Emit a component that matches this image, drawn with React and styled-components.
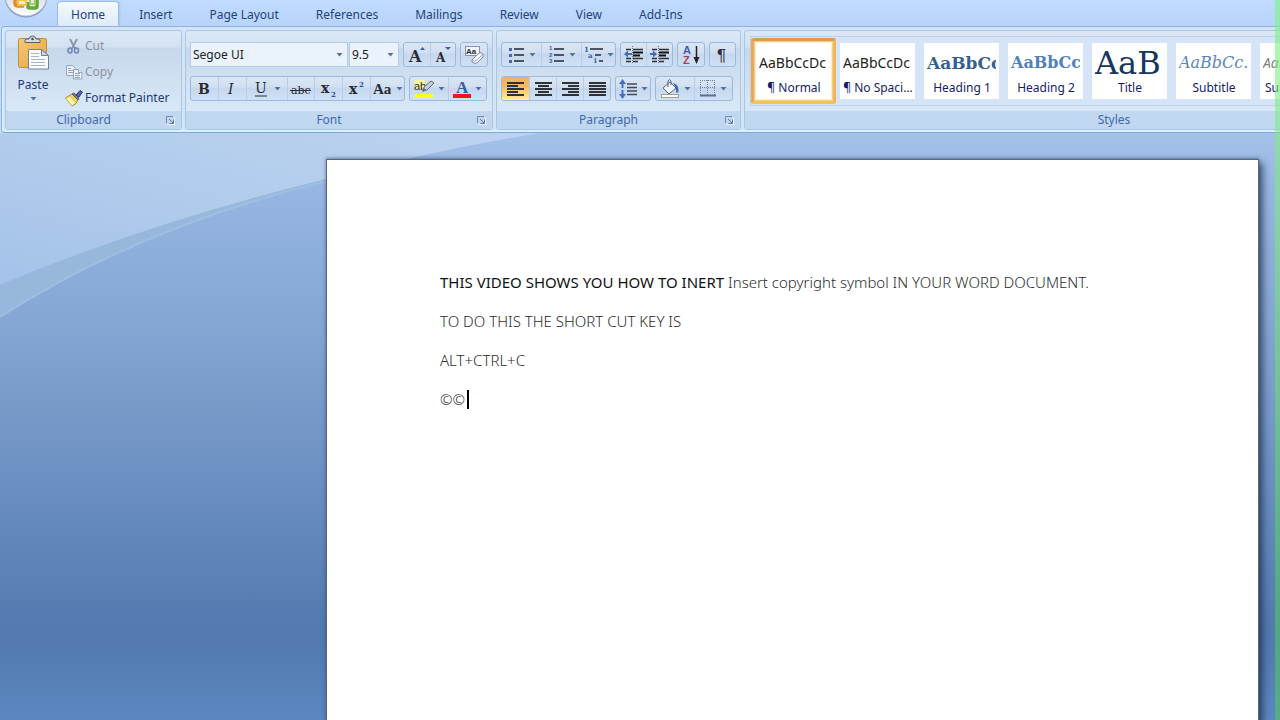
import React, { useState } from 'react'
import styled, { createGlobalStyle, css } from 'styled-components'

const GlobalStyle = createGlobalStyle`
  * {
    box-sizing: border-box;
  }

  body {
    margin: 0;
    font-family: 'Noto Sans', 'Open Sans', sans-serif;
    font-size: 12px;
    line-height: 16px;
    color: #1e3a78;
    background-color: #bfdbff;
  }

  button, input {
    font: inherit;
    color: inherit;
  }

  svg {
    display: block;
    flex: none;
  }
`

const Window = styled.div`
  min-height: 100vh;
  display: flex;
  flex-direction: column;
  overflow: hidden;
`

const EdgeStrip = styled.div`
  position: fixed;
  top: 0;
  right: 0;
  bottom: 0;
  width: 5px;
  pointer-events: none;
  background: linear-gradient(rgba(120, 245, 130, 0.6), rgba(130, 230, 130, 0.6) 30%, rgba(80, 205, 90, 0.55) 85%);
`

const TabBar = styled.nav`
  display: flex;
  align-items: flex-start;
  gap: 1px;
  height: 26px;
  padding-left: 4px;
  background: linear-gradient(#c0dbff, #b9d4fa);
`

const OfficeButton = styled.button`
  width: 52px;
  height: 20px;
  padding: 0;
  border: none;
  background: none;
`

const Tab = styled.button`
  height: 26px;
  padding: 3px 17px 0;
  border: 1px solid transparent;
  border-bottom: none;
  background: none;
  color: #24427c;
  white-space: nowrap;

  ${({ $active }) => $active && css`
    padding: 1px 13px 0;
    margin: 1px 1px 0 0;
    height: 25px;
    border-color: #9dbbe6;
    border-radius: 4px 4px 0 0;
    background: linear-gradient(#f4f9ff, #dfeaf8);
    box-shadow: 1px 0 2px #a8c4e8;
  `}
`

const RibbonBar = styled.div`
  display: flex;
  gap: 3px;
  height: 107px;
  margin-left: 1px;
  padding: 3px 0 2px 3px;
  border: solid #8db2e3;
  border-width: 1px 0 1px 1px;
  border-bottom-color: #84a7cf;
  border-radius: 4px 0 0 4px;
  background: #d3e4f6;
  box-shadow: inset 1px -2px 0 #d5f3ff;
`

const Group = styled.section`
  display: flex;
  flex-direction: column;
  flex: none;
  width: ${({ $width }) => $width}px;
  height: 100px;
  border: 1px solid #a9c7e2;
  border-radius: 3px;
  overflow: hidden;
  background: linear-gradient(#dce8f5 0, #d3e1f1 16px, #c7d8ed 17px, #d9e8f6 80px);
`

const GroupBody = styled.div`
  flex: 1;
  display: flex;
  flex-direction: ${({ $row }) => ($row ? 'row' : 'column')};
  gap: ${({ $row }) => ($row ? 0 : 9)}px;
  padding: ${({ $pad }) => $pad || '11px 4px 0'};
`

const GroupLabel = styled.div`
  display: grid;
  grid-template-columns: ${({ $launcher }) => ($launcher ? '1fr 20px' : '1fr')};
  align-items: center;
  justify-items: center;
  height: 18px;
  background: linear-gradient(#c1d8f0, #bfd7ef);
  color: #4268ad;
`

const Launcher = styled.button`
  width: 12px;
  height: 12px;
  padding: 0;
  border: none;
  background: none;
`

const Row = styled.div`
  display: flex;
  gap: ${({ $gap }) => $gap || 4}px;
`

const ButtonSet = styled.div`
  display: flex;
  height: 25px;
  border: 1px solid #9ab9df;
  border-radius: 3px;
  overflow: hidden;
  background: linear-gradient(#dae6f4 0, #d0dff1 10px, #c5d7ee 11px, #d2e3f6 25px);

  button + button {
    border-left: 1px solid #b7cde9;
  }
`

const Tool = styled.button`
  display: flex;
  align-items: center;
  justify-content: center;
  gap: 4px;
  width: ${({ $width }) => $width || 27}px;
  padding: 0;
  border: none;
  background: ${({ $active }) => ($active ? 'linear-gradient(#f2ae6a, #fbb75a 35%, #ffd77a 75%, #fff0a0)' : 'none')};
`

const Combo = styled.div`
  display: flex;
  align-items: center;
  width: ${({ $width }) => $width}px;
  height: 25px;
  border: 1px solid #b3cbe9;
  background: #eaf2fb;

  input {
    flex: 1;
    min-width: 0;
    padding: 0 2px;
    border: none;
    outline: none;
    background: none;
    color: #222;
  }
`

const ComboArrow = styled.button`
  display: flex;
  align-items: center;
  justify-content: center;
  width: 16px;
  height: 23px;
  padding: 0;
  border: none;
  background: none;
`

const PasteButton = styled.button`
  display: flex;
  flex-direction: column;
  align-items: center;
  width: 44px;
  padding: 0;
  border: none;
  background: none;

  span {
    margin: 7px 0 4px;
  }
`

const ClipList = styled.div`
  display: flex;
  flex-direction: column;
  margin-left: 6px;
`

const ClipButton = styled.button`
  display: flex;
  align-items: center;
  gap: 2px;
  height: 26px;
  padding: 0 4px;
  border: none;
  background: none;
  white-space: nowrap;
  color: #1e3a78;

  &:disabled {
    color: #8e93a0;
  }
`

const Gallery = styled.div`
  display: flex;
  flex: 1;
  height: 70px;
  border: 1px solid #bcd0e9;
  background: #d5e4f6;
  overflow: hidden;
`

const StyleItem = styled.button`
  display: flex;
  flex: none;
  width: 85px;
  height: 66px;
  margin: 1px -1px 0 0;
  padding: 2px;
  border: 3px solid transparent;
  border-radius: 3px;
  background: none;

  ${({ $active }) => $active && css`
    border-color: #d99c56 #efb65c #f3c64e #e9a95c;
    background: #fdeccb;
    box-shadow: inset 0 0 0 1px #f6cf8c;
  `}
`

const StyleCard = styled.span`
  display: flex;
  flex-direction: column;
  width: 75px;
  height: 56px;
  padding: 3px 0 0 3px;
  background: #fff;
  white-space: nowrap;
`

const Preview = styled.span`
  display: flex;
  align-items: center;
  height: 33px;
  width: 69px;
  overflow: hidden;
  text-align: left;
  font-family: ${({ $serif }) => ($serif ? "'DejaVu Serif', serif" : 'inherit')};
  font-size: ${({ $size }) => $size || 14}px;
  font-weight: ${({ $bold }) => ($bold ? 700 : 400)};
  font-style: ${({ $italic }) => ($italic ? 'italic' : 'normal')};
  color: ${({ $color }) => $color || '#222'};
`

const StyleName = styled.span`
  width: 70px;
  line-height: 18px;
  text-align: center;
  color: #161c66;
`

const Workspace = styled.main`
  position: relative;
  flex: 1;
  display: flex;
  padding: 26px 21px 0 326px;
  background: linear-gradient(#a3c1e9 0, #96b6e1 60px, #84a5d2 200px, #5279b0 500px, #5c87c0 590px);
`

const Swoosh = styled.svg`
  position: absolute;
  top: 0;
  left: 0;
`

const Page = styled.article`
  position: relative;
  flex: 1;
  padding: 111px 113px 0;
  border: 1px solid #59677c;
  border-bottom: none;
  background: #fff;
  box-shadow: 4px 4px 7px rgba(30, 45, 75, 0.7), 0 -1px 3px rgba(50, 70, 110, 0.5);
  font-size: 15px;
  font-weight: 300;
  line-height: 23px;
  color: #2c2c2c;

  p {
    margin: 0 0 16px;
  }

  strong {
    font-weight: 400;
    color: #111;
  }
`

const Caret = styled.span`
  display: inline-block;
  width: 2px;
  height: 19px;
  margin-left: 2px;
  background: #000;
  vertical-align: -4px;
`

const serif = 'DejaVu Serif, serif'

const Arrow = () => (
  <svg width="7" height="4" viewBox="0 0 7 4"><path d="M0.5 0h6L3.5 3.5z" fill="#54709f" /></svg>
)

const OfficeLogo = () => (
  <svg width="46" height="20" viewBox="0 0 46 20">
    <defs>
      <linearGradient id="orb" x1="0" y1="0" x2="0" y2="1">
        <stop offset="0.5" stopColor="#d6dde8" />
        <stop offset="1" stopColor="#fff" />
      </linearGradient>
    </defs>
    <circle cx="22" cy="-4" r="21.5" fill="#8397b4" />
    <circle cx="22" cy="-5" r="21" fill="url(#orb)" stroke="#b5c1d3" />
    <g fill="none" strokeWidth="3.5">
      <path d="M20 -4h-7q-2 0-2 2v5q0 3 3 3h6" stroke="#e88a2a" />
      <path d="M24 2v5q0 1 2 1h5q2 0 2-2v-7" stroke="#5fa83a" />
      <path d="M14 0h8v5h-8z" stroke="#f5c33b" strokeWidth="2" />
      <path d="M26 -2h5v6h-5z" stroke="#a3ce5a" strokeWidth="2" />
    </g>
  </svg>
)

const PasteIcon = () => (
  <svg width="34" height="37" viewBox="0 0 34 37">
    <defs>
      <linearGradient id="board" x1="0" y1="0" x2="1" y2="1">
        <stop offset="0" stopColor="#f7c974" />
        <stop offset="1" stopColor="#e5a440" />
      </linearGradient>
    </defs>
    <rect x="2.5" y="5.5" width="28" height="29" rx="2" fill="url(#board)" stroke="#c58b35" />
    <path d="M9 9.500V7.500q0-1.500 2-1.500h2q.5-3 3.500-3t3.500 3h2q2 0 2 1.500v2z" fill="#d9dde3" stroke="#5a616d" />
    <circle cx="16.500" cy="6" r="1.300" fill="#4a505c" />
    <path d="M12.500 16.500h13l7 6v13.500h-20z" fill="#fafcff" stroke="#7482a0" />
    <path d="M25.500 16.500v6h7z" fill="#c9d4e6" stroke="#7482a0" />
    <path d="M15 20.500h8M15 23.500h8M15 26.500h14M15 29.500h14M15 32.500h14" stroke="#a9b3c7" />
  </svg>
)

const CutIcon = () => (
  <svg width="18" height="16" viewBox="-1 0 18 16" fill="none">
    <path d="M4 1l5 9.500M11 1L6 10.500" stroke="#8996aa" strokeWidth="1.800" />
    <ellipse cx="4" cy="12.500" rx="2" ry="2.500" stroke="#7188b3" strokeWidth="1.600" />
    <ellipse cx="10.500" cy="12.500" rx="2" ry="2.500" stroke="#7188b3" strokeWidth="1.600" />
  </svg>
)

const CopyIcon = () => (
  <svg width="18" height="16" viewBox="0 0 18 16" fill="#edf2f9" stroke="#94a5c2">
    <path d="M1.500 1.500h6l3 3v7h-9z" />
    <path d="M3 4.500h3M3 6.500h5M3 8.500h5" />
    <path d="M8.500 5.500h5l3.500 3v6.500H8.500z" />
    <path d="M10 9.500h5M10 11.500h5M10 13.500h5M13.500 5.500v3H17" />
  </svg>
)

const PainterIcon = () => (
  <svg width="18" height="17" viewBox="0 0 18 17">
    <path d="M0.500 8l6.500-4 6 6q-2 5-6 6z" fill="#f0d25c" stroke="#a88c35" />
    <path d="M1 8.500l4-1.500 5 6-3 2.500z" fill="#fff5b4" />
    <path d="M7 4l2-1 5 5-1 2z" fill="#7d7f8c" stroke="#55596b" />
    <path d="M11 5l4-4.500 2.500 1.500-3.500 5z" fill="#5a61a8" stroke="#353b78" />
  </svg>
)

const LauncherIcon = () => (
  <svg width="10" height="10" viewBox="0 0 10 10" fill="none">
    <path d="M1.500 8V1.500H8" stroke="#6f8bb5" />
    <path d="M4 4l4 4M8.500 4.500v4h-4" stroke="#58739e" />
    <path d="M2.500 9.500h7v-7" stroke="#f3f8ff" />
  </svg>
)

// Letter-based toolbar glyphs share one drawing box
const Glyph = ({ width = 18, children }) => (
  <svg width={width} height="20" viewBox={`0 0 ${width} 20`} fontFamily={serif} fill="#2b2b33">{children}</svg>
)

const ClearIcon = () => (
  <Glyph width={22}>
    <rect x="2.500" y="1.500" width="14" height="9" fill="#f1f5fb" stroke="#8594ae" />
    <text x="3" y="9" fontSize="8" fontWeight="700" fontFamily="Liberation Sans, sans-serif">Aa</text>
    <path d="M9 15l7-7q2-1 4 1v3l-6 6q-3 1-5-1z" fill="#f6f8fc" stroke="#7d899f" />
    <path d="M9 15q2 2 5 0l6-6" fill="none" stroke="#a3adbf" />
  </Glyph>
)

const HighlightIcon = () => (
  <Glyph width={20}>
    <path d="M1 1h10v10H1z" fill="#f6f59a" />
    <text x="0" y="11" fontSize="11" fontFamily="Liberation Sans, sans-serif">ab</text>
    <path d="M9 12l1-4 7-6 3 2-7 7z" fill="#c9ced8" stroke="#5f6776" />
    <path d="M8 13l2-4 2 2z" fill="#6e6c37" />
    <path d="M1 15h18v4H1z" fill="#ffff1c" />
  </Glyph>
)

const LINE = '#2f3136'

const AlignIcon = ({ short }) => {
  const x = { left: 0, center: 3, right: 6, full: 0 }[short]
  const width = short === 'full' ? 17 : 11
  return (
    <svg width="17" height="14" viewBox="0 0 17 14" fill={LINE}>
      {[0, 3, 6, 9, 12].map((y, i) => (
        <rect key={y} x={i % 2 ? x : 0} y={y} width={i % 2 ? width : 17} height="2" />
      ))}
    </svg>
  )
}

const ListIcon = ({ numbered }) => (
  <svg width="17" height="19" viewBox="0 -1 17 19">
    <path d="M6 3h10M6 9h10M6 15h10" stroke="#4a5565" strokeWidth="2" />
    {numbered ? (
      <g fill="#3d5da6" fontFamily="Liberation Sans, sans-serif" fontSize="6" fontWeight="700">
        <text x="1" y="4">1</text>
        <text x="1" y="11">2</text>
        <text x="1" y="17">3</text>
      </g>
    ) : (
      <g fill="#4c66ab">
        <rect x="1" y="2" width="3" height="3" />
        <rect x="1" y="8" width="3" height="3" />
        <rect x="1" y="14" width="3" height="3" />
      </g>
    )}
  </svg>
)

const MultilevelIcon = () => (
  <svg width="19" height="18" viewBox="0 0 19 18">
    <path d="M6 3h13M11 9h6M15 15h4" stroke="#4a5565" strokeWidth="2" />
    <g fill="#3d5da6" fontFamily={serif} fontSize="7" fontWeight="700">
      <text x="0" y="6">1</text>
      <text x="4" y="12">a</text>
      <text x="10" y="17">i</text>
    </g>
  </svg>
)

const IndentIcon = ({ increase }) => (
  <svg width="20" height="18" viewBox="0 0 20 18">
    <path d="M2 3.500h5M9 3.500h10M2 12.500h5M9 12.500h10M2 15.500h5M9 15.500h5" stroke={LINE} strokeWidth="1.500" />
    <path d="M9 6.500h10M9 9.500h7" stroke="#111" strokeWidth="2" />
    <path d="M8.500 0v18" stroke="#6a7585" strokeDasharray="1 1" />
    <path d={increase ? 'M7 8L3 4.500v2.500H0v2h3v2.500z' : 'M0 8l4-3.500v2.500h4v2H4v2.500z'} fill="#3f6cc0" />
  </svg>
)

const SortIcon = () => (
  <svg width="19" height="20" viewBox="0 0 19 20" fontFamily="Liberation Sans, sans-serif" fontSize="11" fontWeight="700">
    <text x="1" y="9" fill="#3d5fae">A</text>
    <text x="1" y="19" fill="#a8434f">Z</text>
    <path d="M14.500 1v15" stroke="#222" strokeWidth="1.500" />
    <path d="M11.500 12h6l-3 7z" fill="#222" />
  </svg>
)

const SpacingIcon = () => (
  <svg width="18" height="20" viewBox="0 0 18 20">
    <path d="M8 5h10M8 8.500h10M8 12h10M8 15.500h10" stroke="#444b57" strokeWidth="1.500" />
    <path d="M3.500 0L7 5H4.500v4h-2V5H0zM3.500 20L7 15H4.500v-4h-2v4H0z" fill="#4370c4" />
  </svg>
)

const ShadingIcon = () => (
  <svg width="20" height="20" viewBox="0 0 20 20">
    <path d="M3 9l7-6 6 6-7 6z" fill="#f2f5fa" stroke="#5b6678" />
    <path d="M8 8V2q1.500-3 3 0v4" fill="none" stroke="#5b6678" />
    <path d="M13 4q6 1 5.500 9l-2 1-1-6z" fill="#3f63ad" />
    <rect x="1.500" y="15.500" width="17" height="3" fill="#fafaf4" stroke="#a3a490" />
  </svg>
)

const BordersIcon = () => (
  <svg width="16" height="17" viewBox="0 0 16 17" fill="none" stroke="#74839b">
    <path d="M0.500 0v15M7.500 0v15M14.500 0v15M0 0.500h15M0 7.500h15" strokeDasharray="1 1" />
    <path d="M0 15.500h16" stroke="#60708c" strokeWidth="2" />
  </svg>
)

const TABS = ['Home', 'Insert', 'Page Layout', 'References', 'Mailings', 'Review', 'View', 'Add-Ins']

const STYLES = [
  { name: '¶ Normal', sample: 'AaBbCcDc' },
  { name: '¶ No Spaci...', sample: 'AaBbCcDc' },
  { name: 'Heading 1', sample: 'AaBbCc', serif: true, bold: true, size: 17, color: '#365f91' },
  { name: 'Heading 2', sample: 'AaBbCc', serif: true, bold: true, size: 16, color: '#4f81bd' },
  { name: 'Title', sample: 'AaB', serif: true, size: 32, color: '#17365d' },
  { name: 'Subtitle', sample: 'AaBbCc.', serif: true, italic: true, size: 16, color: '#5b87b8' },
  { name: 'Subtle Em...', sample: 'AaBbCcDc', italic: true, color: '#808080' },
]

function RibbonGroup({ label, width, launcher = true, children }) {
  return (
    <Group $width={width} aria-label={label}>
      {children}
      <GroupLabel $launcher={launcher}>
        <span>{label}</span>
        {launcher && <Launcher aria-label={`${label} options`}><LauncherIcon /></Launcher>}
      </GroupLabel>
    </Group>
  )
}

function ComboBox({ label, width, initial }) {
  const [value, setValue] = useState(initial)
  return (
    <Combo $width={width}>
      <input aria-label={label} value={value} onChange={(e) => setValue(e.target.value)} />
      <ComboArrow aria-label={`${label} list`}><Arrow /></ComboArrow>
    </Combo>
  )
}

function ClipboardGroup() {
  return (
    <RibbonGroup label="Clipboard" width={177}>
      <GroupBody $row $pad="2px 0 0 5px">
        <PasteButton>
          <PasteIcon />
          <span>Paste</span>
          <Arrow />
        </PasteButton>
        <ClipList>
          <ClipButton disabled><CutIcon />Cut</ClipButton>
          <ClipButton disabled><CopyIcon />Copy</ClipButton>
          <ClipButton><PainterIcon />Format Painter</ClipButton>
        </ClipList>
      </GroupBody>
    </RibbonGroup>
  )
}

function FontGroup() {
  return (
    <RibbonGroup label="Font" width={308}>
      <GroupBody>
        <Row>
          <Row $gap={1}>
            <ComboBox label="Font" width={158} initial="Segoe UI" />
            <ComboBox label="Font size" width={50} initial="9.5" />
          </Row>
          <ButtonSet>
            <Tool $width={26} aria-label="Grow font">
              <Glyph><text x="1" y="17" fontSize="16" fontWeight="700">A</text><path d="M12 5l2.500-3L17 5z" fill="#3f5da0" /></Glyph>
            </Tool>
            <Tool $width={25} aria-label="Shrink font">
              <Glyph><text x="2" y="17" fontSize="12" fontWeight="700">A</text><path d="M11 2h6l-3 3z" fill="#3f5da0" /></Glyph>
            </Tool>
          </ButtonSet>
          <ButtonSet><Tool $width={26} aria-label="Clear formatting"><ClearIcon /></Tool></ButtonSet>
        </Row>
        <Row>
          <ButtonSet>
            <Tool aria-label="Bold"><Glyph width={16}><text x="1" y="15" fontSize="14" fontWeight="700">B</text></Glyph></Tool>
            <Tool $width={28} aria-label="Italic"><Glyph width={16}><text x="3" y="15" fontSize="14" fontStyle="italic">I</text></Glyph></Tool>
            <Tool $width={41} aria-label="Underline">
              <Glyph width={16}><text x="1" y="14" fontSize="14">U</text><path d="M1 17h12" stroke="#2b2b33" /></Glyph>
              <Arrow />
            </Tool>
            <Tool aria-label="Strikethrough"><Glyph width={22}><text x="1" y="15" fontSize="11">abc</text><path d="M0 11.500h21" stroke="#2b2b33" /></Glyph></Tool>
            <Tool $width={28} aria-label="Subscript">
              <Glyph><text x="1" y="14" fontSize="14" fontWeight="700">x</text><text x="11" y="18" fontSize="7" fill="#2e4fa5" fontWeight="700">2</text></Glyph>
            </Tool>
            <Tool $width={28} aria-label="Superscript">
              <Glyph><text x="1" y="15" fontSize="14" fontWeight="700">x</text><text x="11" y="8" fontSize="7" fill="#2e4fa5" fontWeight="700">2</text></Glyph>
            </Tool>
            <Tool $width={34} aria-label="Change case">
              <Glyph width={19}><text x="0" y="15" fontSize="15" fontWeight="700" fontFamily="Liberation Serif, serif">Aa</text></Glyph>
              <Arrow />
            </Tool>
          </ButtonSet>
          <ButtonSet>
            <Tool $width={38} aria-label="Highlight"><HighlightIcon /><Arrow /></Tool>
            <Tool $width={38} aria-label="Font color">
              <Glyph><text x="3" y="14" fontSize="17" fontWeight="700" fill="#3c5c96" fontFamily="Liberation Serif, serif">A</text><path d="M0 15h18v4H0z" fill="#f01616" /></Glyph>
              <Arrow />
            </Tool>
          </ButtonSet>
        </Row>
      </GroupBody>
    </RibbonGroup>
  )
}

function ParagraphGroup() {
  const [align, setAlign] = useState('left')
  return (
    <RibbonGroup label="Paragraph" width={245}>
      <GroupBody>
        <Row>
          <ButtonSet>
            <Tool $width={39} aria-label="Bullets"><ListIcon /><Arrow /></Tool>
            <Tool $width={40} aria-label="Numbering"><ListIcon numbered /><Arrow /></Tool>
            <Tool $width={34} aria-label="Multilevel list"><MultilevelIcon /><Arrow /></Tool>
          </ButtonSet>
          <ButtonSet>
            <Tool $width={25} aria-label="Decrease indent"><IndentIcon /></Tool>
            <Tool $width={26} aria-label="Increase indent"><IndentIcon increase /></Tool>
          </ButtonSet>
          <ButtonSet><Tool $width={26} aria-label="Sort"><SortIcon /></Tool></ButtonSet>
          <ButtonSet>
            <Tool $width={25} aria-label="Show marks"><Glyph width={16}><text x="2" y="16" fontSize="17" fontFamily="Liberation Sans, sans-serif">¶</text></Glyph></Tool>
          </ButtonSet>
        </Row>
        <Row>
          <ButtonSet>
            {['left', 'center', 'right', 'full'].map((a) => (
              <Tool key={a} aria-label={`Align ${a}`} $active={align === a} onClick={() => setAlign(a)}>
                <AlignIcon short={a} />
              </Tool>
            ))}
          </ButtonSet>
          <ButtonSet><Tool $width={34} aria-label="Line spacing"><SpacingIcon /><Arrow /></Tool></ButtonSet>
          <ButtonSet>
            <Tool $width={38} aria-label="Shading"><ShadingIcon /><Arrow /></Tool>
            <Tool $width={38} aria-label="Borders"><BordersIcon /><Arrow /></Tool>
          </ButtonSet>
        </Row>
      </GroupBody>
    </RibbonGroup>
  )
}

function StylesGroup() {
  const [current, setCurrent] = useState('¶ Normal')
  return (
    <RibbonGroup label="Styles" width={740} launcher={false}>
      <GroupBody $row $pad="5px 5px 0">
        <Gallery>
          {STYLES.map((s) => (
            <StyleItem key={s.name} $active={s.name === current} onClick={() => setCurrent(s.name)}>
              <StyleCard>
                <Preview $serif={s.serif} $bold={s.bold} $italic={s.italic} $size={s.size} $color={s.color}>{s.sample}</Preview>
                <StyleName>{s.name}</StyleName>
              </StyleCard>
            </StyleItem>
          ))}
        </Gallery>
      </GroupBody>
    </RibbonGroup>
  )
}

function App() {
  const [tab, setTab] = useState('Home')
  return (
    <Window>
      <GlobalStyle />
      <TabBar>
        <OfficeButton aria-label="Office"><OfficeLogo /></OfficeButton>
        {TABS.map((t) => (
          <Tab key={t} $active={t === tab} onClick={() => setTab(t)}>{t}</Tab>
        ))}
      </TabBar>
      <RibbonBar>
        <ClipboardGroup />
        <FontGroup />
        <ParagraphGroup />
        <StylesGroup />
      </RibbonBar>
      <Workspace>
        <Swoosh width="560" height="190" viewBox="0 0 560 190">
          <defs>
            <linearGradient id="sky" x1="1" y1="0" x2="0" y2="1">
              <stop offset="0" stopColor="#bdd2f0" />
              <stop offset="0.5" stopColor="#b1cdec" />
              <stop offset="1" stopColor="#a4c2ea" />
            </linearGradient>
          </defs>
          <path d="M0 184Q140 94 326 48L326 44Q150 89 0 152z" fill="#98b7dc" />
          <path d="M0 184Q140 94 326 48" fill="none" stroke="#9ebfe2" strokeWidth="2" />
          <path d="M0 0H540Q430 18 326 46Q150 89 0 152z" fill="url(#sky)" />
        </Swoosh>
        <Page>
          <p><strong>THIS VIDEO SHOWS YOU HOW TO INERT</strong> Insert copyright symbol IN YOUR WORD DOCUMENT.</p>
          <p>TO DO THIS THE SHORT CUT KEY IS</p>
          <p>ALT+CTRL+C</p>
          <p>©©<Caret /></p>
        </Page>
      </Workspace>
      <EdgeStrip />
    </Window>
  )
}

export default App
